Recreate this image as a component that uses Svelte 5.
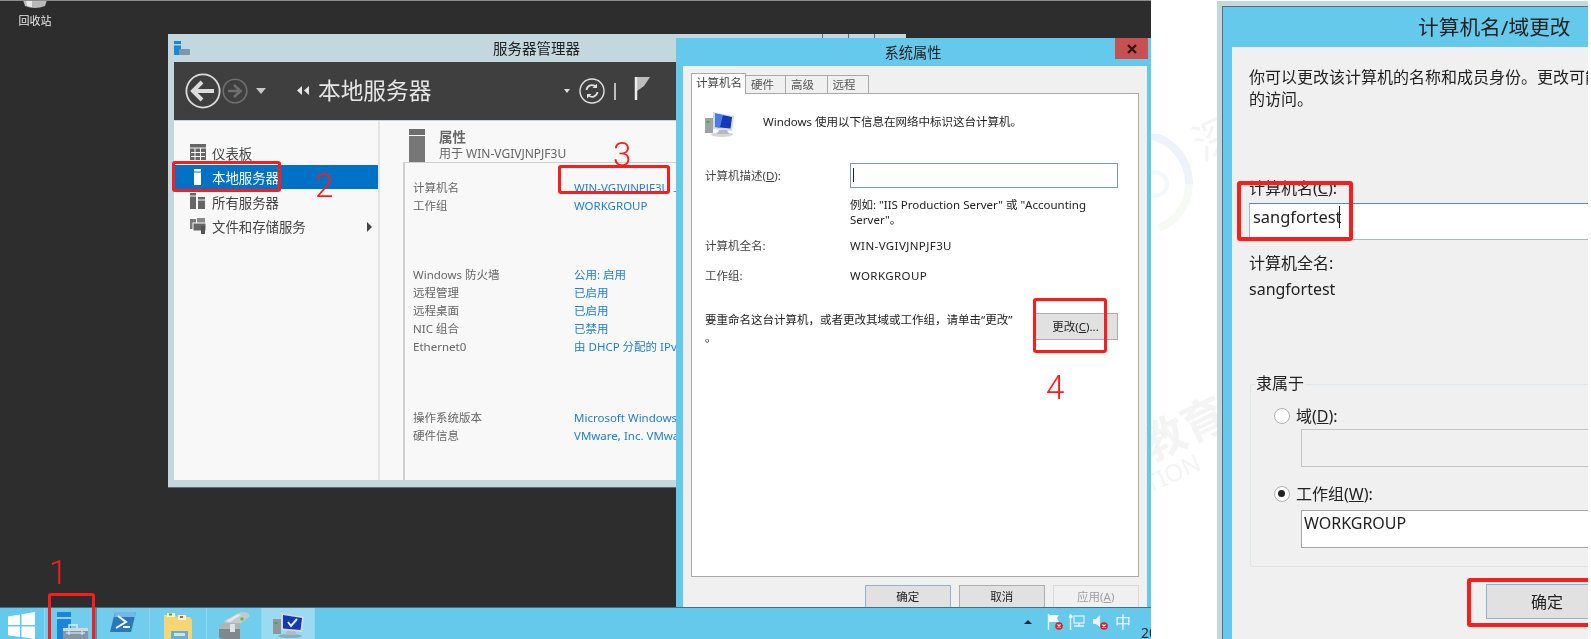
<script>
  const navItems = [
    { label: '仪表板', icon: 'grid' },
    { label: '本地服务器', icon: 'one', active: true },
    { label: '所有服务器', icon: 'all' },
    { label: '文件和存储服务', icon: 'files', arrow: true }
  ];

  const propGroups = [
    [['计算机名', 'WIN-VGIVJNPJF3U 上次'], ['工作组', 'WORKGROUP']],
    [
      ['Windows 防火墙', '公用: 启用'],
      ['远程管理', '已启用'],
      ['远程桌面', '已启用'],
      ['NIC 组合', '已禁用'],
      ['Ethernet0', '由 DHCP 分配的 IPv4 地址']
    ],
    [['操作系统版本', 'Microsoft Windows Server'], ['硬件信息', 'VMware, Inc. VMware']]
  ];

  const tabs = ['计算机名', '硬件', '高级', '远程'];
</script>

<div class="screen">
  <div class="desktop">
    <div class="recycle">
      <svg class="recycle-bin" viewBox="0 0 26 9" width="26" height="9">
        <path d="M1 0h24l-2 6q-10 4-20 0z" fill="#b9b9b9" />
        <path d="M4 0h6v7l-5-1z" fill="#e8e8e8" />
      </svg>
      <span>回收站</span>
    </div>

    <!-- server manager window -->
    <section class="server-window">
      <header class="sw-title">
        <svg viewBox="0 0 16 14" width="16" height="14">
          <rect x="0" y="0" width="7" height="14" fill="#1b86d6" />
          <rect x="0" y="3" width="7" height="1.5" fill="#9fd4f5" />
          <rect x="5" y="8" width="11" height="6" rx="1" fill="#7d97a8" />
        </svg>
        <span>服务器管理器</span>
        <div class="sw-caption"><i></i><i></i><i></i></div>
      </header>

      <nav class="sw-nav">
        <svg class="back" viewBox="0 0 36 36" width="36" height="36">
          <circle cx="18" cy="18" r="16.6" fill="none" stroke="#dcdcdc" stroke-width="1.8" />
          <path d="M8 18h21M17 9l-9 9 9 9" fill="none" stroke="#dcdcdc" stroke-width="4" />
        </svg>
        <svg class="forward" viewBox="0 0 26 26" width="26" height="26">
          <circle cx="13" cy="13" r="11.8" fill="none" stroke="#6f6f6f" stroke-width="1.6" />
          <path d="M6 13h13M12 7l6.5 6-6.5 6" fill="none" stroke="#6f6f6f" stroke-width="2.6" />
        </svg>
        <span class="tri"></span>
        <svg class="crumbs" viewBox="0 0 12 10" width="12" height="10">
          <path d="M5 0v9L0 4.500zM12 0v9L7 4.500z" fill="#e6e6e6" />
        </svg>
        <span class="sw-heading">本地服务器</span>
        <span class="tri small"></span>
        <svg class="refresh" viewBox="0 0 26 26" width="26" height="26">
          <circle cx="13" cy="13" r="12" fill="none" stroke="#e2e2e2" stroke-width="1.4" />
          <path d="M7.500 12a5.500 5.500 0 0 1 9.500-3M18.500 14a5.500 5.500 0 0 1-9.500 3" fill="none" stroke="#e2e2e2" stroke-width="1.800" />
          <path d="M18 5.500v4.500h-4.500zM8 20.500V16h4.500z" fill="#e2e2e2" />
        </svg>
        <span class="nav-bar"></span>
        <svg class="flag" viewBox="0 0 16 23" width="16" height="23">
          <path d="M3 0h13l-6 9-7 5z" fill="#bdbdbd" />
          <path d="M2 0v23" stroke="#ececec" stroke-width="2.500" />
        </svg>
      </nav>

      <div class="sw-main">
        <aside class="sw-side">
          {#each navItems as item}
            <div class="side-item" class:active={item.active}>
              <svg viewBox="0 0 16 16" width="16" height="16">
                {#if item.icon === 'grid'}
                  <rect x="0" y="0" width="16" height="16" fill="#666" />
                  <path d="M0 4h16M1 8.500h14M1 12.500h14M5 4v12M10.500 4v12" stroke="#f8f8f8" stroke-width="1" />
                {:else if item.icon === 'one'}
                  <rect x="4" y="0" width="7" height="16" fill="#fff" />
                  <rect x="4" y="2.500" width="7" height="1" fill="#0072c6" />
                {:else if item.icon === 'all'}
                  <rect x="0" y="0" width="6" height="16" fill="#666" />
                  <rect x="8" y="4" width="7" height="12" fill="#666" />
                  <path d="M0 3h6M8 7h7" stroke="#f8f8f8" />
                {:else}
                  <rect x="0" y="1" width="6" height="10" fill="#777" />
                  <rect x="7" y="0" width="8" height="5" fill="#888" />
                  <rect x="3" y="5" width="13" height="8" fill="#666" stroke="#f8f8f8" />
                  <rect x="11" y="8" width="4" height="8" fill="#555" />
                {/if}
              </svg>
              <span>{item.label}</span>
              {#if item.arrow}<b class="side-arrow"></b>{/if}
            </div>
          {/each}
        </aside>

        <div class="sw-content">
          <div class="prop-head">
            <div class="prop-icon"></div>
            <div>
              <div class="prop-title">属性</div>
              <div class="prop-sub">用于 WIN-VGIVJNPJF3U</div>
            </div>
          </div>
          <div class="prop-box">
            {#each propGroups as group}
              <div class="prop-group">
                {#each group as row}
                  <span class="prop-label">{row[0]}</span>
                  <span class="prop-value">{row[1]}</span>
                {/each}
              </div>
            {/each}
          </div>
        </div>
      </div>
    </section>

    <!-- system properties dialog -->
    <section class="sys-dialog">
      <header class="sd-title">
        <span>系统属性</span>
        <button class="close">
          <svg viewBox="0 0 10 10" width="10" height="10">
            <path d="M1 1l8 8M9 1l-8 8" stroke="#2a1a1a" stroke-width="2.400" />
          </svg>
        </button>
      </header>
      <div class="sd-body">
        <div class="tabs">
          {#each tabs as tab, i}
            <span class="tab" class:current={i === 0}>{tab}</span>
          {/each}
        </div>
        <div class="panel">
          <div class="intro">
            <svg viewBox="0 0 30 27" width="30" height="27">
              <ellipse cx="17" cy="24.500" rx="11" ry="2.500" fill="#d5d5d5" />
              <rect x="0" y="8" width="8" height="15" fill="#9aa3a8" />
              <rect x="1.500" y="11" width="3" height="2" fill="#55a046" />
              <path d="M8 2l21 4-2 15-19-2z" fill="#d6d9dc" />
              <path d="M10 3.500l17 3.500-1.500 11.500L10 17z" fill="#1338b8" />
              <path d="M10 3.500l8 1.600-3 12.400-5-.5z" fill="#4b7be8" />
              <path d="M14 20h8l2 4H12z" fill="#b6babd" />
            </svg>
            <span>Windows 使用以下信息在网络中标识这台计算机。</span>
          </div>
          <div class="form-row first">
            <span class="label">计算机描述(<u>D</u>):</span>
            <div class="text-box"><i class="caret"></i></div>
          </div>
          <p class="hint">例如: "IIS Production Server" 或 "Accounting<br />Server"。</p>
          <div class="form-row full">
            <span class="label">计算机全名:</span>
            <span class="wide">WIN-VGIVJNPJF3U</span>
          </div>
          <div class="form-row wg">
            <span class="label">工作组:</span>
            <span class="wide">WORKGROUP</span>
          </div>
          <div class="rename">
            <p>要重命名这台计算机，或者更改其域或工作组，请单击“更改”<br />。</p>
            <button class="btn change">更改(<u>C</u>)...</button>
          </div>
        </div>
        <div class="actions">
          <button class="btn primary">确定</button>
          <button class="btn">取消</button>
          <button class="btn disabled">应用(<u>A</u>)</button>
        </div>
      </div>
    </section>

    <footer class="taskbar">
      <div class="task start">
        <svg viewBox="0 0 27 27" width="27" height="27">
          <path d="M0 4.500l12-2V13H0zM13.500 2.200L27 0v13H13.500zM0 14.500h12V25L0 23.200zM13.500 14.500H27V27l-13.500-2z" fill="#fff" />
        </svg>
      </div>
      <div class="task w52">
        <svg class="t-icon" viewBox="0 0 31 27" width="31" height="27">
          <rect x="0" y="0" width="14" height="27" fill="#1b86d6" />
          <rect x="0" y="5" width="14" height="2" fill="#8fd0f5" />
          <path d="M12 16v-3h8v3" fill="none" stroke="#dfe8ee" stroke-width="1.500" />
          <rect x="6" y="16" width="25" height="11" fill="#8397a6" />
          <rect x="6" y="16" width="25" height="3" fill="#cfd9e0" />
          <path d="M9 21h19M12 19v4M25 19v4" stroke="#f0f4f6" />
        </svg>
      </div>
      <div class="task w53">
        <svg viewBox="0 0 26 20" width="26" height="20">
          <path d="M5 0h21l-5 20H0z" fill="#2a78bb" />
          <path d="M5 0h21l-1 5H4z" fill="#74b6e4" />
          <path d="M8 4l8 6-10 6" fill="none" stroke="#fff" stroke-width="2" />
          <path d="M13 15h7" stroke="#fff" stroke-width="2" />
        </svg>
      </div>
      <div class="task w57">
        <svg viewBox="0 0 30 28" width="30" height="28">
          <path d="M1 3h11l2 2h13l2 3v20H1z" fill="#f4d774" />
          <rect x="4" y="1" width="8" height="4" fill="#f7f1d8" />
          <rect x="6" y="1.500" width="3" height="2" fill="#4aa24a" />
          <rect x="15" y="3" width="8" height="5" fill="#f7f1d8" />
          <rect x="17" y="4" width="3" height="2" fill="#d0582a" />
          <rect x="8" y="19" width="17" height="9" fill="#6aaed6" />
          <rect x="11" y="21" width="11" height="3" fill="#c9e4f3" />
        </svg>
      </div>
      <div class="task w55">
        <svg viewBox="0 0 33 28" width="33" height="28">
          <path d="M6 9l14-8q6-2 10 0l2 3-10 8H8z" fill="#c4c9cb" />
          <path d="M8 9l12-7 3 1-11 7z" fill="#e6e9ea" />
          <path d="M1 14l6-3h15v6H1z" fill="#aeb4b6" />
          <path d="M1 17h21v11H5l-4-3z" fill="#7f888c" />
          <path d="M12 12h5v8h-5z" fill="#dfe3e4" />
          <circle cx="24" cy="7" r="1.800" fill="#5cbf4f" />
        </svg>
      </div>
      <div class="task w53 running">
        <svg viewBox="0 0 31 26" width="31" height="26">
          <ellipse cx="17" cy="24" rx="12" ry="2" fill="#7fb2c7" />
          <rect x="0" y="7" width="8" height="15" fill="#8e979b" />
          <rect x="1.500" y="10" width="3" height="2" fill="#55a046" />
          <path d="M8 1l23 4-2 15-21-2z" fill="#d6d9dc" />
          <path d="M10 3l19 3-1.500 12L10 16.500z" fill="#1338b8" />
          <path d="M15 10l3 4 6-7" fill="none" stroke="#e8f0ff" stroke-width="2" />
          <path d="M14 19h8l2 4H12z" fill="#b6babd" />
        </svg>
      </div>
      <div class="tray">
        <span class="tray-up"></span>
        <svg viewBox="0 0 16 16" width="16" height="16">
          <path d="M1.500 0v16" stroke="#e8f4fa" stroke-width="1.400" />
          <path d="M2 1h10l-2 3 2 4H2z" fill="#f6fbfd" />
          <circle cx="12" cy="12" r="3.800" fill="#d9202a" />
          <path d="M10.500 10.500l3 3M13.500 10.500l-3 3" stroke="#fff" stroke-width="1.200" />
        </svg>
        <svg viewBox="0 0 16 16" width="16" height="16">
          <rect x="5" y="2" width="10" height="7" fill="none" stroke="#e8f4fa" stroke-width="1.200" />
          <path d="M1.500 0v16M5 12h10M10 9v3" stroke="#e8f4fa" stroke-width="1.400" />
          <circle cx="1.800" cy="2.500" r="1.800" fill="#f6fbfd" />
        </svg>
        <svg viewBox="0 0 16 16" width="16" height="16">
          <path d="M1 5h3l4-4v12l-4-3H1z" fill="#e8f4fa" />
          <circle cx="12" cy="12" r="3.800" fill="#d9202a" />
          <path d="M10.500 10.500l3 3M13.500 10.500l-3 3" stroke="#fff" stroke-width="1.200" />
        </svg>
        <span class="tray-ime">中</span>
        <span class="tray-clock">20</span>
      </div>
    </footer>

    <!-- red annotations on the left screenshot -->
    <div class="mark m1"></div>
    <div class="mark m2"></div>
    <div class="mark m3"></div>
    <div class="mark m4"></div>
    <span class="num n1">1</span>
    <span class="num n2">2</span>
    <span class="num n3">3</span>
    <span class="num n4">4</span>
  </div>

  <div class="watermark">
    <svg class="wm-seal" viewBox="0 0 66 100" width="66" height="100">
      <path d="M0 2a48 48 0 0 1 38 48" fill="none" stroke="#eef3fb" stroke-width="8" />
      <path d="M38 50a48 48 0 0 1-30 44" fill="none" stroke="#f5faf2" stroke-width="8" />
      <circle cx="4" cy="50" r="12" fill="none" stroke="#f4f7fb" stroke-width="4" />
    </svg>
    <span class="wm-a">深</span>
    <span class="wm-b">教育</span>
    <span class="wm-c">TION</span>
  </div>

  <!-- computer name dialog -->
  <section class="name-dialog">
    <div class="nd-frame">
      <header class="nd-title">计算机名/域更改</header>
      <div class="nd-body">
        <p class="nd-intro">你可以更改该计算机的名称和成员身份。更改可能影响对网络资源<br />的访问。</p>
        <div class="nd-label">计算机名(<u>C</u>):</div>
        <div class="nd-input">sangfortest<i class="caret tall"></i></div>
        <div class="nd-label fullname">计算机全名:</div>
        <div class="nd-value">sangfortest</div>
        <div class="group">
          <div class="legend">隶属于</div>
          <div class="radio-row">
            <span class="radio"></span>
            <span>域(<u>D</u>):</span>
          </div>
          <div class="field off"></div>
          <div class="radio-row second">
            <span class="radio on"></span>
            <span>工作组(<u>W</u>):</span>
          </div>
          <div class="field">WORKGROUP</div>
        </div>
        <button class="btn primary nd-ok">确定</button>
      </div>
      <div class="mark m5"></div>
      <div class="mark m6"></div>
    </div>
  </section>
</div>

<style>
  :global(body) {
    margin: 0;
    background: #fff;
  }

  .screen {
    position: relative;
    display: flex;
    width: 1591px;
    height: 639px;
    overflow: hidden;
    background: #fff;
    color: #222;
    font: 11.5px/18px "Noto Sans", "Noto Sans CJK SC", sans-serif;
    filter: blur(0.45px);
  }

  p {
    margin: 0;
  }

  button {
    font: inherit;
    padding: 0;
  }

  svg {
    display: block;
    flex: none;
  }

  .desktop {
    position: relative;
    flex: none;
    width: 1151px;
    height: 639px;
    box-sizing: border-box;
    border-top: 1px solid #8c8c8c;
    background: #2d2d2d;
    overflow: hidden;
  }

  .recycle {
    position: absolute;
    left: 10px;
    top: -1px;
    width: 50px;
    text-align: center;
    color: #e8e8e8;
    font-size: 11px;
    line-height: 16px;
  }

  .recycle-bin {
    margin: 0 auto 4px 12px;
  }

  /* server manager */
  .server-window {
    position: absolute;
    left: 168px;
    top: 33px;
    width: 738px;
    height: 454px;
    box-sizing: border-box;
    padding: 0 6px 7px;
    display: flex;
    flex-direction: column;
    background: #c3d7de;
    border-bottom: 1px solid #5e6a70;
  }

  .sw-title {
    position: relative;
    height: 28px;
    flex: none;
    display: flex;
    align-items: center;
    color: #222;
    font-size: 14.5px;
  }

  .sw-title > span {
    position: absolute;
    left: 319px;
    top: 5px;
  }

  .sw-caption {
    position: absolute;
    right: 0;
    top: 0;
    display: flex;
    height: 5px;
  }

  .sw-caption i {
    width: 25px;
    border-left: 1px solid #5e6a70;
  }

  .sw-nav {
    flex: none;
    height: 58px;
    display: flex;
    align-items: center;
    box-sizing: border-box;
    padding-left: 11px;
    background: #3f3f3f;
    color: #e6e6e6;
  }

  .forward {
    margin-left: 1px;
  }

  .tri {
    width: 0;
    height: 0;
    margin-left: 8px;
    border: 5px solid transparent;
    border-top: 6px solid #c8c8c8;
    border-bottom: 0;
  }

  .crumbs {
    margin-left: 31px;
  }

  .sw-heading {
    margin-left: 9px;
    font-size: 22.7px;
    line-height: 30px;
  }

  .tri.small {
    margin-left: 133px;
    border-width: 3.500px;
    border-top: 4px solid #e0e0e0;
    border-bottom: 0;
  }

  .refresh {
    margin-left: 9px;
  }

  .nav-bar {
    width: 2px;
    height: 17px;
    margin: 0 18px 0 9px;
    background: #bdbdbd;
  }

  .flag {
    margin-bottom: 5px;
  }

  .sw-main {
    flex: 1;
    display: flex;
    min-height: 0;
    margin-top: 1px;
    background: #f8f8f8;
  }

  .sw-side {
    flex: none;
    box-sizing: border-box;
    padding-top: 19px;
    border-right: 2px solid #e4e4e4;
    width: 206px;
    color: #444;
    font-size: 13.400px;
  }

  .side-item {
    position: relative;
    display: flex;
    align-items: center;
    gap: 6px;
    height: 24.500px;
    padding-left: 16px;
  }

  .side-item span {
    padding-top: 3px;
  }

  .side-item.active {
    background: #0072c6;
    color: #fff;
  }

  .side-arrow {
    position: absolute;
    left: 193px;
    top: 8px;
    width: 0;
    height: 0;
    border-left: 5px solid #444;
    border-top: 5px solid transparent;
    border-bottom: 5px solid transparent;
  }

  .sw-content {
    flex: 1;
    display: flex;
    flex-direction: column;
    min-width: 0;
    padding-left: 23px;
  }

  .prop-head {
    display: flex;
    gap: 14px;
    flex: none;
    height: 41px;
    padding: 8px 0 0 6px;
    box-sizing: border-box;
    color: #666;
    font-size: 12px;
    line-height: 15px;
  }

  .prop-icon {
    width: 16px;
    height: 33px;
    background: linear-gradient(#6e6e6e 0 6px, #f8f8f8 6px 7px, #777 7px);
  }

  .prop-title {
    font-size: 13.500px;
    font-weight: 700;
    line-height: 17px;
  }

  .prop-box {
    flex: 1;
    border: solid #cfcfcf;
    border-width: 1px 0 0 2px;
    padding: 16px 0 0 8px;
    overflow: hidden;
  }

  .prop-group {
    display: grid;
    grid-template-columns: 161px 300px;
    grid-auto-rows: 18px;
    margin-bottom: 51px;
    line-height: 18px;
    white-space: nowrap;
  }

  .prop-group:nth-child(2) {
    margin-bottom: 53px;
  }

  .prop-label {
    color: #666;
  }

  .prop-value {
    color: #1f7fcb;
  }

  /* system properties */
  .sys-dialog {
    position: absolute;
    left: 676px;
    top: 37px;
    width: 475px;
    height: 600px;
    box-sizing: border-box;
    padding: 0 4px 0 7px;
    background: #65c9eb;
    display: flex;
    flex-direction: column;
  }

  .sd-title {
    position: relative;
    flex: none;
    height: 28px;
    text-align: center;
    font-size: 14.300px;
    line-height: 29px;
    color: #222;
    padding-right: 4px;
  }

  .close {
    position: absolute;
    right: -1px;
    top: 0;
    width: 33px;
    height: 21px;
    border: 0;
    background: #c75050;
    display: flex;
    align-items: center;
    justify-content: center;
  }

  .sd-body {
    flex: 1;
    background: #f0f0f0;
    padding: 8px 8px 0;
  }

  .tabs {
    display: flex;
    height: 19px;
    align-items: flex-end;
    position: relative;
    z-index: 1;
  }

  .tab {
    width: 40px;
    height: 18px;
    box-sizing: border-box;
    border: solid #a9a9a9;
    border-width: 1px 1px 0 0;
    padding-left: 5px;
    line-height: 18px;
    color: #555;
    background: #f0f0f0;
  }

  .tab:nth-child(3),
  .tab:nth-child(4) {
    width: 41.500px;
  }

  .tab.current {
    width: 55px;
    height: 21px;
    border-width: 1px 1px 0 1px;
    margin-bottom: -1px;
    padding-left: 4px;
    background: #fff;
    color: #444;
  }

  .panel {
    height: 484px;
    box-sizing: border-box;
    border: 1px solid #a9a9a9;
    background: #fff;
    padding: 16px 20px 0 13px;
  }

  .intro {
    display: flex;
    height: 27px;
    gap: 28px;
    line-height: 24px;
  }

  .form-row {
    display: grid;
    grid-template-columns: 145px 1fr;
    align-items: center;
  }

  .form-row.first {
    margin-top: 26px;
  }

  .label {
    color: #444;
  }

  .wide {
    letter-spacing: 0.4px;
  }

  .text-box {
    position: relative;
    height: 25px;
    box-sizing: border-box;
    border: 1px solid #7a9bb5;
    background: #fff;
  }

  .caret {
    position: absolute;
    left: 2px;
    top: 4px;
    width: 1px;
    height: 14px;
    background: #222;
  }

  .hint {
    margin: 9px 0 0 145px;
    line-height: 15px;
    white-space: nowrap;
  }

  .form-row.full {
    margin-top: 10px;
  }

  .form-row.wg {
    margin-top: 12px;
  }

  .rename {
    display: flex;
    justify-content: space-between;
    margin-top: 26px;
    white-space: nowrap;
  }

  .btn {
    box-sizing: border-box;
    border: 1px solid #adadad;
    background: #e1e1e1;
    color: #222;
  }

  .btn.change {
    width: 85px;
    height: 27px;
    margin-top: 2px;
  }

  .actions {
    display: flex;
    gap: 7.500px;
    justify-content: flex-end;
    margin-top: 8px;
  }

  .actions .btn {
    width: 86.500px;
    height: 26px;
    padding-bottom: 3px;
  }

  .btn.primary {
    border: 2px solid #8db2d4;
    border-width: 1px;
  }

  .btn.disabled {
    background: #f0f0f0;
    border-color: #d9d9d9;
    color: #a0a0a0;
  }

  /* taskbar */
  .taskbar {
    position: absolute;
    left: 0;
    right: 0;
    bottom: 0;
    height: 32px;
    box-sizing: border-box;
    display: flex;
    border-top: 1px solid #47707f;
    background: #65c9eb;
    overflow: hidden;
  }

  .task {
    flex: none;
    display: flex;
    justify-content: center;
    align-items: flex-start;
    padding-top: 4px;
    box-sizing: border-box;
    border-right: 1px solid #8ed7ef;
    background: #70cdec;
  }

  .task.start {
    width: 45px;
    justify-content: flex-start;
    padding-left: 8px;
    background: #65c9eb;
  }

  .t-icon {
    margin-left: 4px;
  }

  .w52 {
    width: 52px;
    border-right: 2px solid #4a93ad;
  }

  .w53 {
    width: 53px;
  }

  .w57 {
    width: 57px;
  }

  .w55 {
    width: 55px;
  }

  .task.running {
    background: #9bdbf2;
  }

  .tray {
    margin-left: auto;
    display: flex;
    align-items: center;
    gap: 6.500px;
    padding: 0 0 4px;
    color: #eef9fd;
    width: 128px;
    box-sizing: border-box;
  }

  .tray-up {
    width: 0;
    height: 0;
    margin-right: 8px;
    margin-left: 1px;
    border: 4px solid transparent;
    border-bottom: 4px solid #1d2a30;
    border-top: 0;
  }

  .tray-ime {
    margin-left: 1px;
    font-size: 16px;
  }

  .tray-clock {
    position: absolute;
    left: 1141px;
    top: 16px;
    color: #1b2a30;
    font-size: 14px;
  }

  /* watermark between the two shots */
  .watermark {
    position: absolute;
    left: 1151px;
    top: 0;
    width: 66px;
    height: 639px;
    overflow: hidden;
    color: #f4f4f4;
  }

  .wm-seal {
    position: absolute;
    left: 0;
    top: 134px;
  }

  .wm-a {
    position: absolute;
    left: 42px;
    top: 112px;
    font-size: 44px;
    line-height: 50px;
    transform: rotate(-25deg);
  }

  .wm-b {
    position: absolute;
    left: -12px;
    top: 398px;
    font-size: 44px;
    line-height: 60px;
    font-weight: 700;
    white-space: nowrap;
    transform: rotate(-25deg);
  }

  .wm-c {
    position: absolute;
    left: -8px;
    top: 458px;
    font-size: 24px;
    line-height: 30px;
    white-space: nowrap;
    transform: rotate(-25deg);
  }

  /* computer name dialog */
  .name-dialog {
    position: relative;
    flex: none;
    width: 371px;
    height: 638px;
    margin: 1px 0 0 66px;
    box-sizing: border-box;
    padding: 5px 0 0 5px;
    background: #c3d7de;
    font-size: 16px;
    line-height: 22px;
  }

  .nd-frame {
    position: relative;
    height: 100%;
    box-sizing: border-box;
    padding-left: 9px;
    border-left: 1px solid #5e6e78;
    border-top: 1px solid #5e6e78;
    background: #65c9eb;
    display: flex;
    flex-direction: column;
    overflow: hidden;
  }

  .nd-title {
    flex: none;
    height: 40px;
    padding-left: 186px;
    font-size: 20.700px;
    line-height: 41px;
    color: #222;
  }

  .nd-body {
    flex: 1;
    padding: 19px 0 0 17px;
    background: #f0f0f0;
    white-space: nowrap;
    overflow: hidden;
  }

  .nd-label {
    margin-top: 67px;
  }

  .nd-input {
    position: relative;
    height: 37px;
    margin-top: 4px;
    padding-left: 3px;
    box-sizing: border-box;
    border: 1px solid #a6bccc;
    border-top-color: #5d86a8;
    border-right: 0;
    background: #fff;
    font-size: 16.400px;
    line-height: 26px;
  }

  .caret.tall {
    left: 89px;
    top: 2px;
    height: 22px;
  }

  .nd-label.fullname {
    margin-top: 12px;
  }

  .nd-value {
    margin-top: 4px;
  }

  .group {
    height: 183px;
    box-sizing: border-box;
    margin-top: 84px;
    margin-left: 1px;
    padding-left: 23px;
    border: 1px solid #dce5eb;
    border-right: 0;
    border-radius: 3px 0 0 3px;
  }

  .legend {
    width: max-content;
    margin: -13px 0 2px -19px;
    padding: 0 1px;
    background: #f0f0f0;
  }

  .radio-row {
    display: flex;
    align-items: center;
    gap: 6px;
    margin-top: 11px;
  }

  .radio-row.second {
    margin-top: 16px;
  }

  .radio {
    position: relative;
    width: 16px;
    height: 16px;
    box-sizing: border-box;
    border: 1.500px solid #b0b0b0;
    border-radius: 50%;
    background: #fff;
  }

  .radio.on::after {
    content: "";
    position: absolute;
    left: 3px;
    top: 3px;
    width: 7px;
    height: 7px;
    border-radius: 50%;
    background: #222;
  }

  .field {
    height: 38px;
    margin: 5px 0 0 27px;
    padding-left: 2px;
    box-sizing: border-box;
    border: 1.500px solid #a5a5a5;
    border-right: 0;
    background: #fff;
    line-height: 25px;
  }

  .field.off {
    margin-top: 2px;
    border-color: #c4c4c4;
    background: #f0f0f0;
  }

  .nd-ok {
    display: block;
    width: 122px;
    height: 35px;
    margin: 17px 0 0 237px;
    border: 1.500px solid #8db2d4;
    font-size: 16px;
  }

  /* red boxes */
  .mark {
    position: absolute;
    box-sizing: border-box;
    border: 3px solid #fb1c1c;
    border-radius: 3px;
    z-index: 3;
  }

  .m1 {
    left: 48px;
    top: 592px;
    width: 47px;
    height: 60px;
  }

  .m2 {
    left: 172px;
    top: 160px;
    width: 109px;
    height: 31px;
  }

  .m3 {
    left: 558px;
    top: 164px;
    width: 112px;
    height: 29px;
  }

  .m4 {
    left: 1033px;
    top: 297px;
    width: 74px;
    height: 55px;
  }

  .m5 {
    left: 14px;
    top: 174px;
    width: 116px;
    height: 60px;
    border-width: 4px;
  }

  .m6 {
    left: 244px;
    top: 571px;
    width: 160px;
    height: 49px;
    border-width: 4px;
  }

  .num {
    position: absolute;
    z-index: 3;
    color: #fb1c1c;
    font: 300 33px/33px Roboto, sans-serif;
  }

  .n1 {
    left: 49px;
    top: 555px;
  }

  .n2 {
    left: 315px;
    top: 168px;
  }

  .n3 {
    left: 613px;
    top: 137px;
  }

  .n4 {
    left: 1046px;
    top: 370px;
  }
</style>
